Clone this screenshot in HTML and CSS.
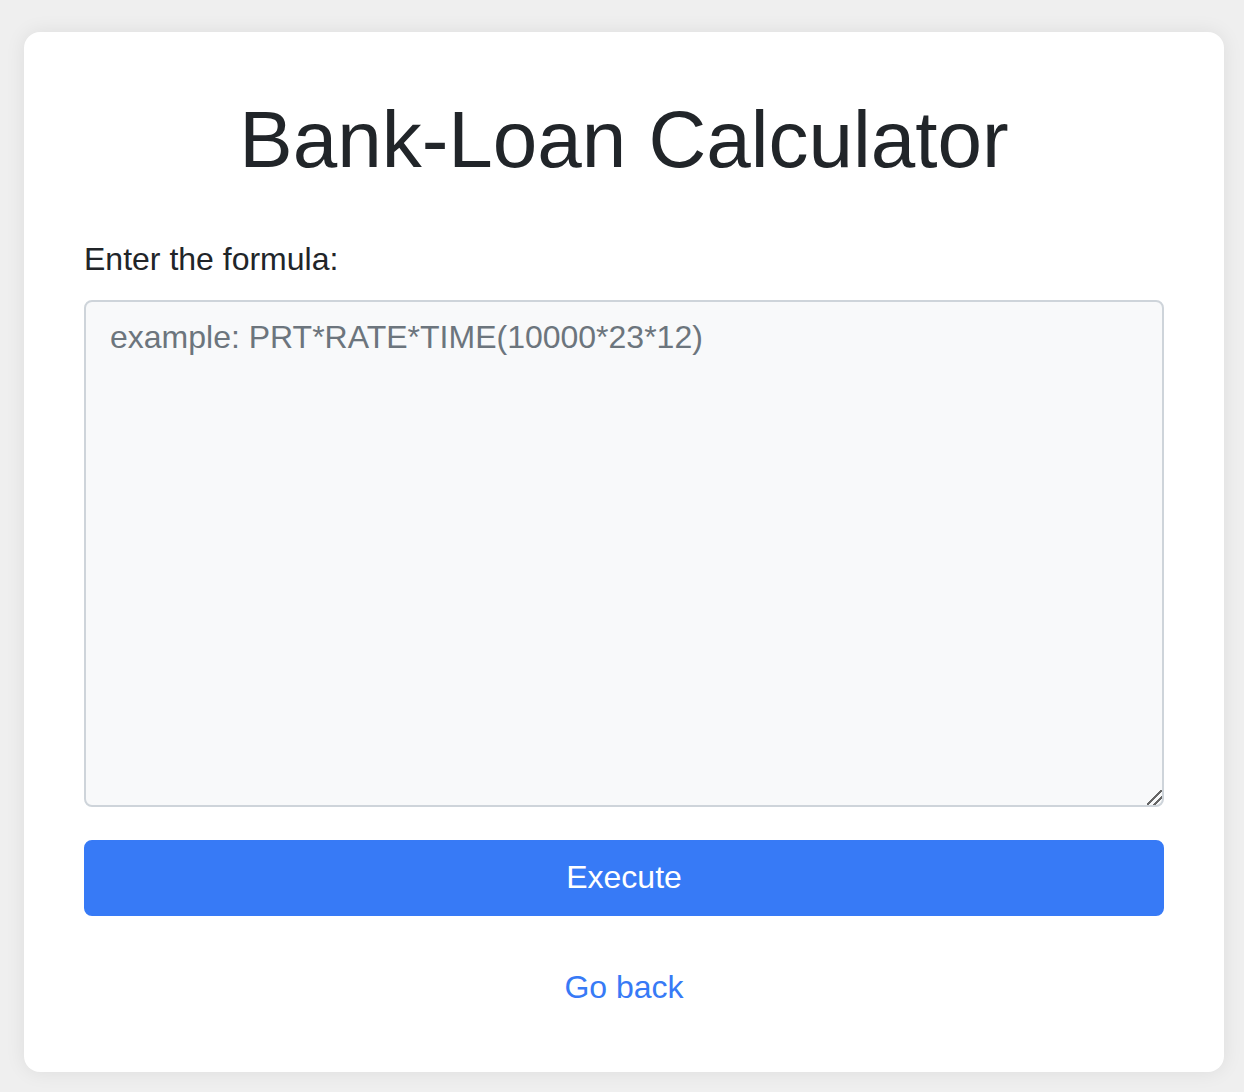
FILE: index.html
```html
<!DOCTYPE html>
<html lang="en">
<head>
<meta charset="utf-8">
<title>Bank-Loan Calculator</title>
<link rel="stylesheet" href="styles.css">
</head>
<body>
<main class="card">
  <h1 class="title">Bank-Loan Calculator</h1>
  <form class="form">
    <label class="label" for="formula">Enter the formula:</label>
    <textarea id="formula" class="input" placeholder="example: PRT*RATE*TIME(10000*23*12)"></textarea>
    <button type="button" class="btn">Execute</button>
  </form>
  <div class="back"><a href="#" class="back-link">Go back</a></div>
</main>
</body>
</html>
```
FILE: styles.css
```css
* { box-sizing: border-box; }
html, body { margin: 0; padding: 0; }
body {
  background: #efefef;
  font-family: "Liberation Sans", Arial, Helvetica, sans-serif;
  color: #212529;
  padding: 32px 24px 20px;
}
.card {
  background: #ffffff;
  border-radius: 16px;
  box-shadow: 0 0 20px rgba(0, 0, 0, 0.08);
  padding: 60px 60px 61px;
  width: 1200px;
}
.title {
  margin: 0 0 47px;
  font-size: 80px;
  line-height: 1.2;
  font-weight: 400;
  text-align: center;
  color: #212529;
}
.form {
  display: flex;
  flex-direction: column;
}
.label {
  font-size: 32px;
  line-height: 48px;
  margin-bottom: 17px;
  color: #212529;
}
.input {
  display: block;
  width: 100%;
  height: 507px;
  padding: 11px 24px 13px;
  border: 2px solid #ced4da;
  border-radius: 8px;
  background: #f8f9fa;
  font-family: "Liberation Sans", Arial, Helvetica, sans-serif;
  font-size: 32px;
  line-height: 48px;
  color: #212529;
  resize: vertical;
  outline: none;
}
.input::placeholder { color: #6c757d; opacity: 1; }
.input::-webkit-resizer {
  background: linear-gradient(135deg,
    transparent 0 46%, #666666 46% 54%,
    transparent 54% 70%, #666666 70% 78%,
    transparent 78%);
}
.btn {
  margin-top: 33px;
  height: 76px;
  width: 100%;
  border: 2px solid #377af6;
  border-radius: 8px;
  background: #377af6;
  color: #ffffff;
  font-family: "Liberation Sans", Arial, Helvetica, sans-serif;
  font-size: 32px;
  line-height: 48px;
  padding: 11px 24px 13px;
  cursor: pointer;
}
.back {
  margin-top: 47px;
  text-align: center;
  font-size: 32px;
  line-height: 48px;
}
.back-link {
  color: #377af6;
  text-decoration: none;
}
```
